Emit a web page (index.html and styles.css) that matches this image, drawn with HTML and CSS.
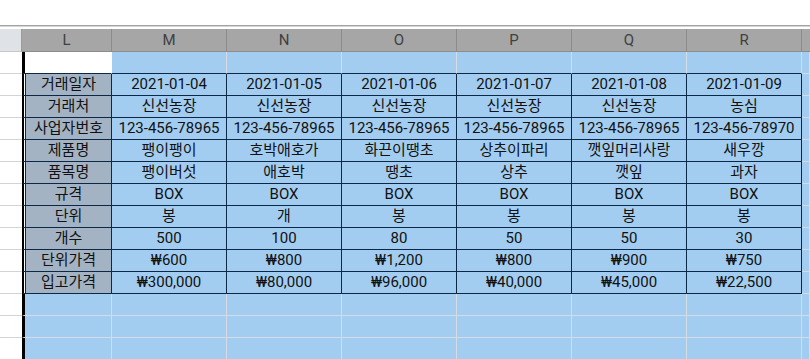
FILE: index.html
```html
<!DOCTYPE html>
<html lang="ko">
<head>
<meta charset="utf-8">
<link rel="stylesheet" href="styles.css">
</head>
<body>
<div class="top"></div>
<div class="top2"></div>
<div class="sheet">
  <div class="row hdr">
    <div class="c corner"></div>
    <div class="c h hl">L</div><div class="c h">M</div><div class="c h">N</div><div class="c h">O</div><div class="c h">P</div><div class="c h">Q</div><div class="c h">R</div><div class="c h hx"></div>
  </div>
  <div class="row r1">
    <div class="c rh"></div>
    <div class="c lw"></div>
    <div class="c b tt"></div><div class="c b tt"></div><div class="c b tt"></div><div class="c b tt"></div><div class="c b tt"></div><div class="c b tt"></div><div class="c b"></div>
  </div>
  <div class="row">
    <div class="c rh"></div><div class="c lab">거래일자</div>
    <div class="c b t">2021-01-04</div><div class="c b t">2021-01-05</div><div class="c b t">2021-01-06</div><div class="c b t">2021-01-07</div><div class="c b t">2021-01-08</div><div class="c b t">2021-01-09</div><div class="c b"></div>
  </div>
  <div class="row">
    <div class="c rh"></div><div class="c lab">거래처</div>
    <div class="c b t">신선농장</div><div class="c b t">신선농장</div><div class="c b t">신선농장</div><div class="c b t">신선농장</div><div class="c b t">신선농장</div><div class="c b t">농심</div><div class="c b"></div>
  </div>
  <div class="row">
    <div class="c rh"></div><div class="c lab">사업자번호</div>
    <div class="c b t">123-456-78965</div><div class="c b t">123-456-78965</div><div class="c b t">123-456-78965</div><div class="c b t">123-456-78965</div><div class="c b t">123-456-78965</div><div class="c b t">123-456-78970</div><div class="c b"></div>
  </div>
  <div class="row">
    <div class="c rh"></div><div class="c lab">제품명</div>
    <div class="c b t">팽이팽이</div><div class="c b t">호박애호가</div><div class="c b t">화끈이땡초</div><div class="c b t">상추이파리</div><div class="c b t">깻잎머리사랑</div><div class="c b t">새우깡</div><div class="c b"></div>
  </div>
  <div class="row">
    <div class="c rh"></div><div class="c lab">품목명</div>
    <div class="c b t">팽이버섯</div><div class="c b t">애호박</div><div class="c b t">땡초</div><div class="c b t">상추</div><div class="c b t">깻잎</div><div class="c b t">과자</div><div class="c b"></div>
  </div>
  <div class="row">
    <div class="c rh"></div><div class="c lab">규격</div>
    <div class="c b t">BOX</div><div class="c b t">BOX</div><div class="c b t">BOX</div><div class="c b t">BOX</div><div class="c b t">BOX</div><div class="c b t">BOX</div><div class="c b"></div>
  </div>
  <div class="row">
    <div class="c rh"></div><div class="c lab">단위</div>
    <div class="c b t">봉</div><div class="c b t">개</div><div class="c b t">봉</div><div class="c b t">봉</div><div class="c b t">봉</div><div class="c b t">봉</div><div class="c b"></div>
  </div>
  <div class="row">
    <div class="c rh"></div><div class="c lab">개수</div>
    <div class="c b t">500</div><div class="c b t">100</div><div class="c b t">80</div><div class="c b t">50</div><div class="c b t">50</div><div class="c b t">30</div><div class="c b"></div>
  </div>
  <div class="row">
    <div class="c rh"></div><div class="c lab">단위가격</div>
    <div class="c b t">₩600</div><div class="c b t">₩800</div><div class="c b t">₩1,200</div><div class="c b t">₩800</div><div class="c b t">₩900</div><div class="c b t">₩750</div><div class="c b"></div>
  </div>
  <div class="row">
    <div class="c rh"></div><div class="c lab">입고가격</div>
    <div class="c b t">₩300,000</div><div class="c b t">₩80,000</div><div class="c b t">₩96,000</div><div class="c b t">₩40,000</div><div class="c b t">₩45,000</div><div class="c b t">₩22,500</div><div class="c b"></div>
  </div>
  <div class="row">
    <div class="c rh"></div><div class="c b lb"></div>
    <div class="c b"></div><div class="c b"></div><div class="c b"></div><div class="c b"></div><div class="c b"></div><div class="c b"></div><div class="c b"></div>
  </div>
  <div class="row">
    <div class="c rh"></div><div class="c b lb"></div>
    <div class="c b"></div><div class="c b"></div><div class="c b"></div><div class="c b"></div><div class="c b"></div><div class="c b"></div><div class="c b"></div>
  </div>
  <div class="row">
    <div class="c rh"></div><div class="c b lb"></div>
    <div class="c b"></div><div class="c b"></div><div class="c b"></div><div class="c b"></div><div class="c b"></div><div class="c b"></div><div class="c b"></div>
  </div>
</div>
</body>
</html>
```
FILE: styles.css
```css
html, body {
  margin: 0;
  padding: 0;
  background: #ffffff;
}
body {
  width: 810px;
  height: 359px;
  overflow: hidden;
  font-family: Roboto, "Noto Sans CJK KR", "Noto Sans", sans-serif;
  font-size: 15px;
  color: #111111;
}
.top {
  height: 25px;
  border-bottom: 1px solid #a3a3a3;
}
.top2 {
  height: 2px;
  border-top: 1px solid #d6d6d6;
}
.row {
  display: grid;
  grid-template-columns: 22px 90px repeat(6, 115px) 8px;
  height: 22px;
}
.row.hdr {
  height: 23px;
}
.c {
  box-sizing: border-box;
  border-right: 1px solid #d6dce3;
  border-bottom: 1px solid #d6dce3;
  display: flex;
  align-items: center;
  justify-content: center;
  white-space: nowrap;
  overflow: hidden;
  line-height: 1;
}
.corner {
  background: #dfe2e6;
  border-right: 1px solid #9a9a9a;
  border-bottom: 1px solid #c8c8c8;
}
.h {
  background: #a6a6a6;
  color: #404040;
  border-right: 1px solid #8c8c8c;
  border-bottom: 1px solid #8c8c8c;
}
.hx {
  border-right: none;
}
.rh {
  background: #ffffff;
  border-right: none;
  border-bottom: 1px solid #d4d4d4;
}
.b {
  background: #a3cdf0;
}
.lw {
  background: #ffffff;
  border-left: 2px solid #000000;
  box-shadow: inset 1px 0 0 #000000;
  border-right: 1px solid #ffffff;
  border-bottom: 1px solid #0b2846;
}
.tt {
  border-bottom: 1px solid #0b2846;
}
.t {
  border-right: 1px solid #0b2846;
  border-bottom: 1px solid #0b2846;
}
.lab {
  background: #a4b3c3;
  border-left: 2px solid #000000;
  box-shadow: inset 1px 0 0 #ffffff, inset 2px 0 0 #0b2846;
  border-right: 1px solid #0b2846;
  border-bottom: 1px solid #0b2846;
  padding-left: 2px;
}
.lb {
  border-left: 2px solid #000000;
  box-shadow: inset 1px 0 0 #000000;
}
```
